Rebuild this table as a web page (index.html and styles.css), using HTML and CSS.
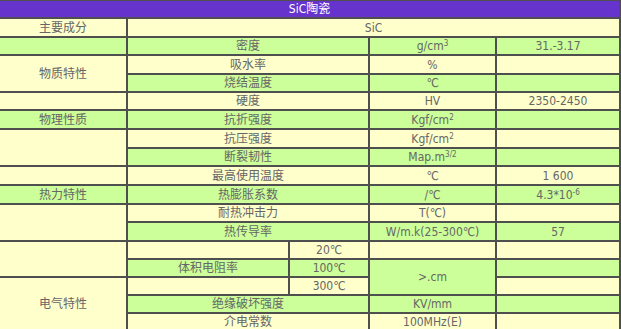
FILE: index.html
```html
<!DOCTYPE html>
<html lang="zh">
<head>
<meta charset="utf-8">
<title>SiC陶瓷</title>
<link rel="stylesheet" href="styles.css">
</head>
<body>
<table class="spec">
  <colgroup>
    <col class="col-a">
    <col class="col-bl">
    <col class="col-br">
    <col class="col-c">
    <col class="col-d">
  </colgroup>
  <tr class="head"><td colspan="5">SiC陶瓷</td></tr>
  <tr class="cream tall"><td>主要成分</td><td colspan="4">SiC</td></tr>
  <tr class="green"><td></td><td colspan="2">密度</td><td>g/cm<sup>3</sup></td><td>31.-3.17</td></tr>
  <tr class="cream tall"><td rowspan="2">物质特性</td><td colspan="2">吸水率</td><td>%</td><td></td></tr>
  <tr class="green"><td colspan="2">烧结温度</td><td>℃</td><td></td></tr>
  <tr class="cream"><td></td><td colspan="2">硬度</td><td>HV</td><td>2350-2450</td></tr>
  <tr class="green tall"><td>物理性质</td><td colspan="2">抗折强度</td><td>Kgf/cm<sup>2</sup></td><td></td></tr>
  <tr class="cream tall"><td rowspan="2"></td><td colspan="2">抗压强度</td><td>Kgf/cm<sup>2</sup></td><td></td></tr>
  <tr class="green"><td colspan="2">断裂韧性</td><td>Map.m<sup>3/2</sup></td><td></td></tr>
  <tr class="cream tall"><td></td><td colspan="2">最高使用温度</td><td>℃</td><td>1 600</td></tr>
  <tr class="green tall"><td>热力特性</td><td colspan="2">热膨胀系数</td><td>/℃</td><td>4.3*10<sup>-6</sup></td></tr>
  <tr class="cream"><td rowspan="2"></td><td colspan="2">耐热冲击力</td><td>T(℃)</td><td></td></tr>
  <tr class="green tall"><td colspan="2">热传导率</td><td>W/m.k(25-300℃)</td><td>57</td></tr>
  <tr class="cream short"><td rowspan="2"></td><td></td><td>20℃</td><td></td><td></td></tr>
  <tr class="green"><td>体积电阻率</td><td>100℃</td><td rowspan="2">&gt;.cm</td><td></td></tr>
  <tr class="cream shorter"><td rowspan="3">电气特性</td><td></td><td>300℃</td><td></td></tr>
  <tr class="green"><td colspan="2">绝缘破坏强度</td><td>KV/mm</td><td></td></tr>
  <tr class="cream"><td colspan="2">介电常数</td><td>100MHz(E)</td><td></td></tr>
</table>
</body>
</html>
```
FILE: styles.css
```css
html, body {
  margin: 0;
  padding: 0;
  background: #ffffff;
}

.spec {
  border-collapse: separate;
  border-spacing: 0;
  table-layout: fixed;
  width: 621px;
  border-top: 1px solid #4f4f4f;
  font-family: "DejaVu Sans Condensed", "Liberation Sans", "Noto Sans CJK SC", sans-serif;
  font-size: 12px;
  color: #666666;
}

.col-a { width: 128px; }
.col-bl { width: 162px; }
.col-br { width: 80px; }
.col-c { width: 127px; }
.col-d { width: 124px; }

.spec td {
  padding: 0;
  border-right: 2px solid #4f4f4f;
  border-bottom: 2px solid #4f4f4f;
  text-align: center;
  vertical-align: middle;
  line-height: 16px;
  white-space: nowrap;
  overflow: hidden;
}

.spec tr { height: 18px; }
.spec tr.tall { height: 19px; }
.spec tr.short { height: 17px; }
.spec tr.shorter { height: 16px; }

.head td {
  background: #6633cc;
  color: #ffffff;
}

.cream td { background: #ffffcc; }
.green td { background: #ccff99; }

.spec sup {
  font-size: 8px;
  line-height: 0;
  vertical-align: 4px;
}
```
